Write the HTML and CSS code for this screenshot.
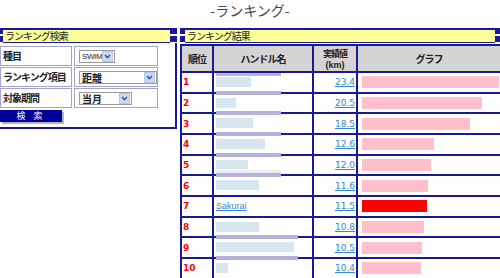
FILE: index.html
```html
<!doctype html>
<html>
<head>
<meta charset="UTF-8">
<title>ランキング</title>
<link rel="stylesheet" href="styles.css">
</head>
<body>
<h1 class="title">-ランキング-</h1>

<div class="wrap">
  <div class="panel search">
    <div class="head"><i class="cap"></i><span class="head-text">ランキング検索</span><i class="cap cap-r"></i></div>
    <div class="search-body">
      <table class="form">
        <tr>
          <th>種目</th>
          <td><span class="sel sel-swim"><span class="sel-val">SWIM</span><span class="sel-btn"><svg width="7" height="5" viewBox="0 0 7 5"><path d="M1 1l2.5 2.5L6 1" fill="none" stroke="#3d5a8a" stroke-width="1.6"/></svg></span></span></td>
        </tr>
        <tr>
          <th>ランキング項目</th>
          <td><span class="sel sel-item"><span class="sel-val">距離</span><span class="sel-btn"><svg width="7" height="5" viewBox="0 0 7 5"><path d="M1 1l2.5 2.5L6 1" fill="none" stroke="#3d5a8a" stroke-width="1.6"/></svg></span></span></td>
        </tr>
        <tr>
          <th>対象期間</th>
          <td><span class="sel sel-term"><span class="sel-val">当月</span><span class="sel-btn"><svg width="7" height="5" viewBox="0 0 7 5"><path d="M1 1l2.5 2.5L6 1" fill="none" stroke="#3d5a8a" stroke-width="1.6"/></svg></span></span></td>
        </tr>
      </table>
      <button class="btn" type="button">検 索</button>
    </div>
  </div>

  <div class="panel result">
    <div class="head"><i class="cap cap-l"></i><span class="head-text">ランキング結果</span><i class="cap cap-end"></i></div>
    <table class="rank">
      <colgroup><col class="c-no"><col class="c-name"><col class="c-val"><col class="c-bar"></colgroup>
      <tr class="hd">
        <th>順位</th><th>ハンドル名</th><th><span class="two">実績値</span><span class="two unit">(km)</span></th><th>グラフ</th>
      </tr>
      <tr>
        <td class="no">1</td>
        <td class="name"><div class="nm"><span class="band band-t" style="width:65px"></span><span class="blob" style="width:35px"></span><span class="band" style="width:65px"></span></div></td>
        <td class="val"><a href="#">23.4</a></td>
        <td class="graph"><div class="bar" style="width:137px"></div></td>
      </tr>
      <tr>
        <td class="no">2</td>
        <td class="name"><div class="nm"><span class="blob" style="width:20px"></span><span class="band" style="width:65px"></span></div></td>
        <td class="val"><a href="#">20.5</a></td>
        <td class="graph"><div class="bar" style="width:120px"></div></td>
      </tr>
      <tr>
        <td class="no">3</td>
        <td class="name"><div class="nm"><span class="blob" style="width:37px"></span><span class="band" style="width:65px"></span></div></td>
        <td class="val"><a href="#">18.5</a></td>
        <td class="graph"><div class="bar" style="width:108px"></div></td>
      </tr>
      <tr>
        <td class="no">4</td>
        <td class="name"><div class="nm"><span class="blob" style="width:49px"></span><span class="band" style="width:65px"></span></div></td>
        <td class="val"><a href="#">12.6</a></td>
        <td class="graph"><div class="bar" style="width:72px"></div></td>
      </tr>
      <tr>
        <td class="no">5</td>
        <td class="name"><div class="nm"><span class="blob" style="width:32px"></span><span class="haze" style="width:65px"></span><span class="band" style="width:65px"></span></div></td>
        <td class="val"><a href="#">12.0</a></td>
        <td class="graph"><div class="bar" style="width:69px"></div></td>
      </tr>
      <tr>
        <td class="no">6</td>
        <td class="name"><div class="nm"><span class="blob" style="width:43px"></span></div></td>
        <td class="val"><a href="#">11.6</a></td>
        <td class="graph"><div class="bar" style="width:66px"></div></td>
      </tr>
      <tr>
        <td class="no">7</td>
        <td class="name"><a href="#">Sakurai</a></td>
        <td class="val"><a href="#">11.5</a></td>
        <td class="graph"><div class="bar bar-me" style="width:65px"></div></td>
      </tr>
      <tr>
        <td class="no">8</td>
        <td class="name"><div class="nm"><span class="blob" style="width:43px"></span><span class="band" style="width:82px"></span></div></td>
        <td class="val"><a href="#">10.8</a></td>
        <td class="graph"><div class="bar" style="width:62px"></div></td>
      </tr>
      <tr>
        <td class="no">9</td>
        <td class="name"><div class="nm"><span class="blob" style="width:78px"></span><span class="band" style="width:82px"></span></div></td>
        <td class="val"><a href="#">10.5</a></td>
        <td class="graph"><div class="bar" style="width:60px"></div></td>
      </tr>
      <tr>
        <td class="no">10</td>
        <td class="name"><div class="nm"><span class="blob" style="width:12px"></span></div></td>
        <td class="val"><a href="#">10.4</a></td>
        <td class="graph"><div class="bar" style="width:59px"></div></td>
      </tr>
    </table>
  </div>
</div>
</body>
</html>
```

FILE: styles.css
```css
body{margin:0;background:#fff;color:#333;font:10px/1.2 "Noto Sans CJK JP",sans-serif;overflow:hidden;}
a{color:#3388cc;text-decoration:underline;}

.title{margin:0;height:28px;font-size:14px;line-height:20px;font-weight:normal;color:#444;text-align:center;}

.wrap{display:flex;gap:3px;align-items:flex-start;}
.panel{flex:none;}
.search{width:177px;}
.result{width:320px;}

/* yellow caption bar with navy end caps */
.head{display:flex;height:13px;border-top:2px solid #191996;}
.head-text{flex:1;background:#ffff99;border-bottom:1px solid #191996;padding-left:2px;font-size:10px;line-height:12px;letter-spacing:-1px;color:#222;white-space:nowrap;}
.cap{display:block;width:3px;height:12px;background:linear-gradient(#191996 0 4px,#fff 4px 6px,#191996 6px);}
.cap-r{width:7px;}
.cap-l{width:5px;}
.cap-end{width:5px;}

.search-body{border-right:2px solid #191996;border-bottom:2px solid #191996;padding:2px 0 5px;}
.form{border-collapse:separate;border-spacing:2px 1px;margin-left:-2px;}
.form th,.form td{border:1px solid #a3a3cc;height:18px;padding:0;}
.form th{width:68px;padding-left:2px;text-align:left;font-weight:bold;font-size:10px;letter-spacing:-1px;color:#222;white-space:nowrap;}
.form td{width:78px;padding-left:4px;}

.sel{display:flex;align-items:center;justify-content:space-between;box-sizing:border-box;height:13px;border:1px solid #9a9a9a;background:#fff;}
.sel-swim{width:36px;}
.sel-item{width:78px;}
.sel-term{width:53px;}
.sel-val{padding-left:2px;font:8px/11px "Liberation Sans",sans-serif;letter-spacing:-0.4px;color:#222;}
.sel-item .sel-val,.sel-term .sel-val{font:bold 10px/11px "Noto Sans CJK JP",sans-serif;letter-spacing:0;}
.sel-btn{display:flex;align-items:center;justify-content:center;width:9px;height:9px;margin-right:1px;background:#c9d8f5;border:1px solid #b4c6ea;}

.btn{display:block;margin:1px 0 0;padding:0;width:62px;height:12px;border:0;background:#000099;color:#fff;font:9px/12px "Noto Sans CJK JP",sans-serif;letter-spacing:3px;box-shadow:2px 2px 0 #b5b5b5;}

/* ranking table */
.rank{margin-top:1px;width:320px;border-collapse:collapse;table-layout:fixed;border:2px solid #191996;}
.c-no{width:32px;}
.c-name{width:100px;}
.c-val{width:44px;}
.c-bar{width:144px;}
.rank th,.rank td{border:2px solid #191996;padding:0;}
.rank th{background:#d4d4d4;height:25px;font-size:10px;line-height:12px;font-weight:bold;letter-spacing:-1px;color:#222;text-align:center;}
.two{display:block;height:13px;font-size:9px;line-height:13px;}
.unit{height:11px;line-height:11px;font:bold 9px/11px "Liberation Sans",sans-serif;letter-spacing:0;}
.rank td{height:18.67px;vertical-align:middle;}
.no{padding-left:1px !important;color:#f00;font:bold 9px "DejaVu Sans",sans-serif;}
.name{padding-left:2px !important;font:9px "Liberation Sans",sans-serif;}
.val{text-align:right;padding-right:1px !important;font:9px "DejaVu Sans",sans-serif;}
.graph{padding-left:4px !important;}
.bar{height:12px;background:#ffc0cb;}
.bar-me{background:#f00;}

/* blurred handle names */
.nm{display:flex;flex-direction:column;height:18.67px;}
.blob{display:block;height:10px;margin-top:4px;background:#d6e7f0;}
.band{display:block;height:4px;margin-top:auto;margin-bottom:-3px;background:#b2b2dd;}
.band-t{margin-top:0;margin-bottom:0;height:3px;}
.band-t + .blob{margin-top:1px;}
.haze{display:block;height:3px;margin-top:1px;background:#ececf6;}
```
